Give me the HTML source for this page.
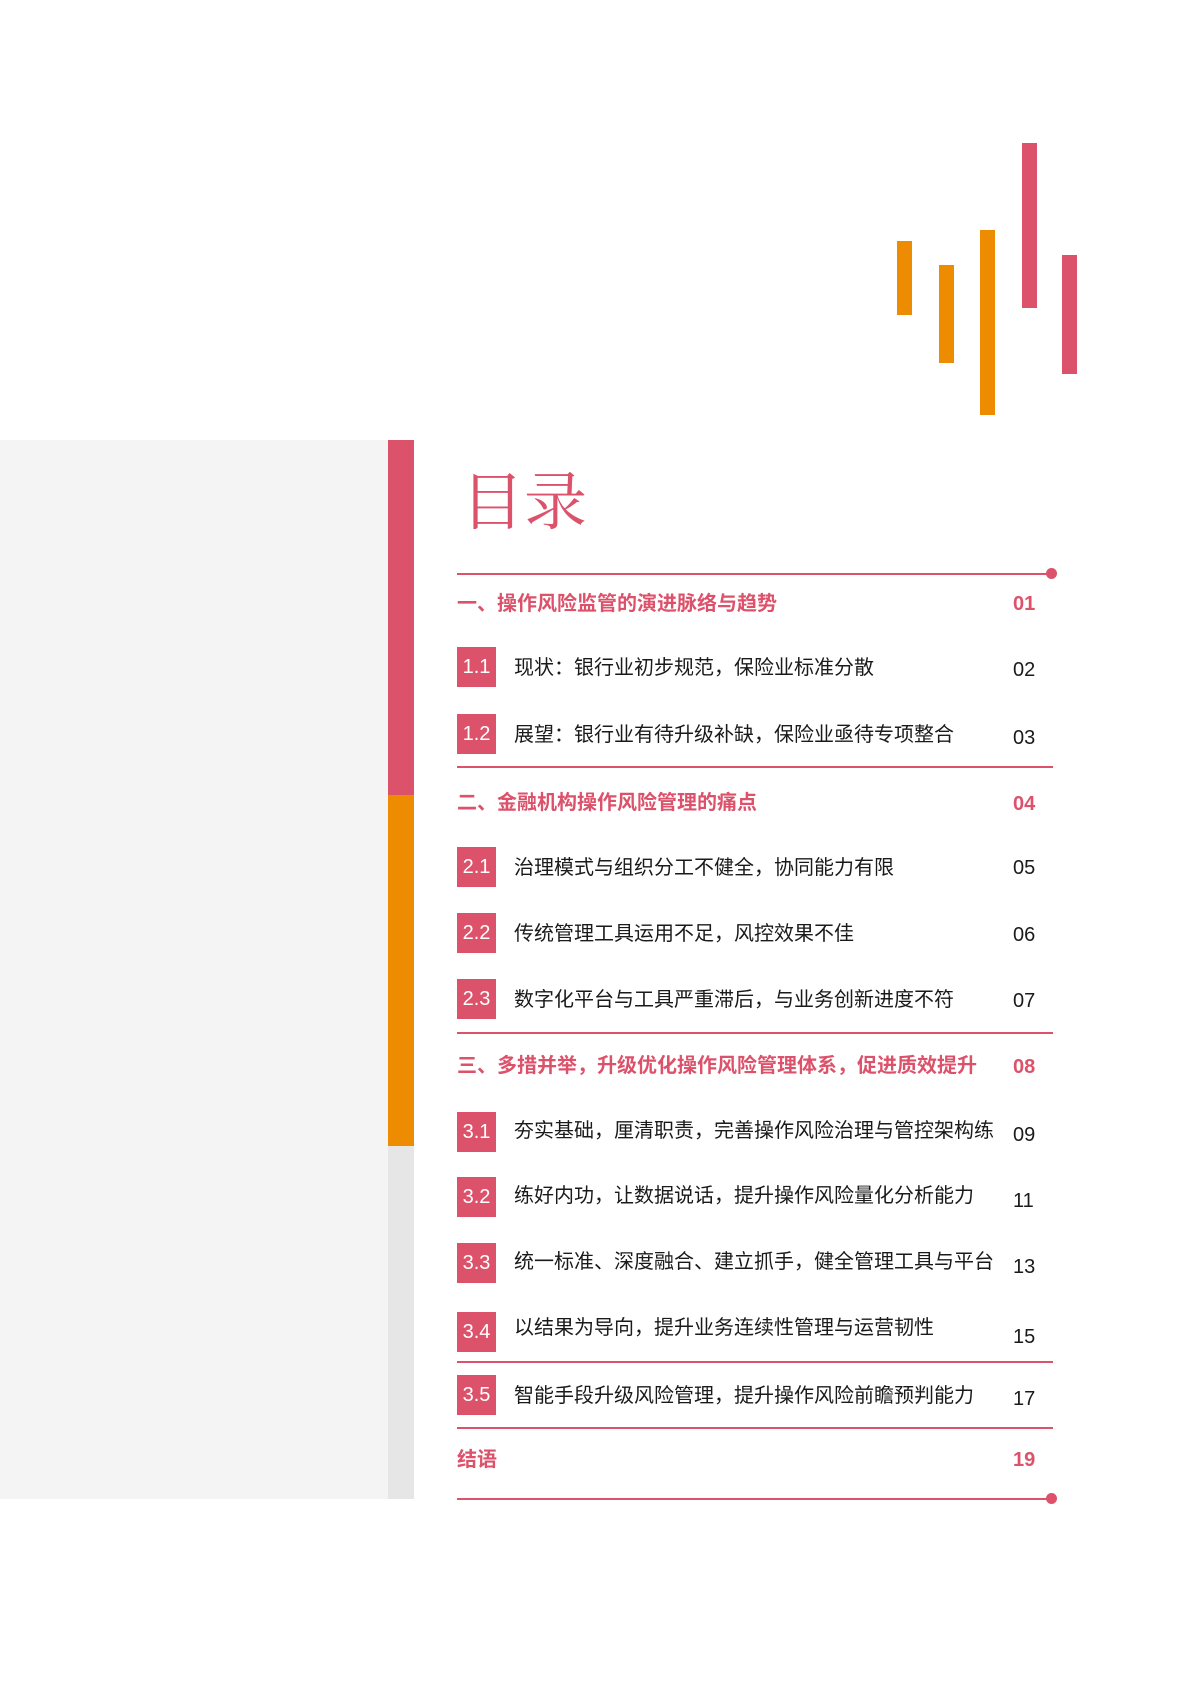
<!DOCTYPE html>
<html><head><meta charset="utf-8"><style>
body{margin:0;width:1190px;height:1683px;background:#fff;position:relative;overflow:hidden;font-family:"Liberation Sans","Noto Sans CJK SC",sans-serif;}
.a{position:absolute}
.bar{position:absolute;width:15px}
.o{background:#ed8c00}.p{background:#dc526b}
.box{position:absolute;left:457px;width:39px;height:40px;background:#dc526b;color:#fff;font-size:20px;line-height:40px;text-align:center}
.t{position:absolute;left:514px;font-size:20px;color:#1a1a1a;line-height:24px;white-space:nowrap}
.n{position:absolute;left:1013px;font-size:20px;color:#1a1a1a;line-height:24px}
.h{position:absolute;left:457px;font-size:20px;font-weight:bold;color:#dc526b;line-height:24px;white-space:nowrap}
.hn{position:absolute;left:1013px;font-size:20px;font-weight:bold;color:#dc526b;line-height:24px}
.ln{position:absolute;left:457px;width:596px;height:2px;background:#dc526b}
.dot{position:absolute;width:11px;height:11px;border-radius:50%;background:#dc526b}
</style></head><body>
<div class="bar o" style="left:897px;top:241px;height:74px"></div>
<div class="bar o" style="left:939px;top:265px;height:98px"></div>
<div class="bar o" style="left:980px;top:230px;height:185px"></div>
<div class="bar p" style="left:1022px;top:143px;height:165px"></div>
<div class="bar p" style="left:1062px;top:255px;height:119px"></div>

<div class="a" style="left:0;top:440px;width:388px;height:1059px;background:#f4f4f4"></div>
<div class="a" style="left:388px;top:440px;width:26px;height:355px;background:#dc526b"></div>
<div class="a" style="left:388px;top:795px;width:26px;height:351px;background:#ed8c00"></div>
<div class="a" style="left:388px;top:1146px;width:26px;height:353px;background:#e6e6e6"></div>

<div class="a" style="left:461px;top:463px;font-size:63px;line-height:80px;color:#dc526b;font-family:'Liberation Serif','Noto Serif CJK SC',serif">目录</div>

<div class="ln" style="top:573px"></div><div class="dot" style="left:1046px;top:568px"></div>

<div class="h" style="top:592px">一、操作风险监管的演进脉络与趋势</div><div class="hn" style="top:592px">01</div>
<div class="box" style="top:647px">1.1</div><div class="t" style="top:656px">现状：银行业初步规范，保险业标准分散</div><div class="n" style="top:658px">02</div>
<div class="box" style="top:714px">1.2</div><div class="t" style="top:723px">展望：银行业有待升级补缺，保险业亟待专项整合</div><div class="n" style="top:726px">03</div>
<div class="ln" style="top:766px"></div>
<div class="h" style="top:791px">二、金融机构操作风险管理的痛点</div><div class="hn" style="top:792px">04</div>
<div class="box" style="top:847px">2.1</div><div class="t" style="top:856px">治理模式与组织分工不健全，协同能力有限</div><div class="n" style="top:856px">05</div>
<div class="box" style="top:913px">2.2</div><div class="t" style="top:922px">传统管理工具运用不足，风控效果不佳</div><div class="n" style="top:923px">06</div>
<div class="box" style="top:979px">2.3</div><div class="t" style="top:988px">数字化平台与工具严重滞后，与业务创新进度不符</div><div class="n" style="top:989px">07</div>
<div class="ln" style="top:1032px"></div>
<div class="h" style="top:1054px">三、多措并举，升级优化操作风险管理体系，促进质效提升</div><div class="hn" style="top:1055px">08</div>
<div class="box" style="top:1112px">3.1</div><div class="t" style="top:1119px">夯实基础，厘清职责，完善操作风险治理与管控架构练</div><div class="n" style="top:1123px">09</div>
<div class="box" style="top:1177px">3.2</div><div class="t" style="top:1184px">练好内功，让数据说话，提升操作风险量化分析能力</div><div class="n" style="top:1189px">11</div>
<div class="box" style="top:1243px">3.3</div><div class="t" style="top:1250px">统一标准、深度融合、建立抓手，健全管理工具与平台</div><div class="n" style="top:1255px">13</div>
<div class="box" style="top:1312px">3.4</div><div class="t" style="top:1316px">以结果为导向，提升业务连续性管理与运营韧性</div><div class="n" style="top:1325px">15</div>
<div class="ln" style="top:1361px"></div>
<div class="box" style="top:1375px">3.5</div><div class="t" style="top:1384px">智能手段升级风险管理，提升操作风险前瞻预判能力</div><div class="n" style="top:1387px">17</div>
<div class="ln" style="top:1427px"></div>
<div class="h" style="top:1448px">结语</div><div class="hn" style="top:1448px">19</div>
<div class="ln" style="top:1498px"></div><div class="dot" style="left:1046px;top:1493px"></div>
</body></html>
